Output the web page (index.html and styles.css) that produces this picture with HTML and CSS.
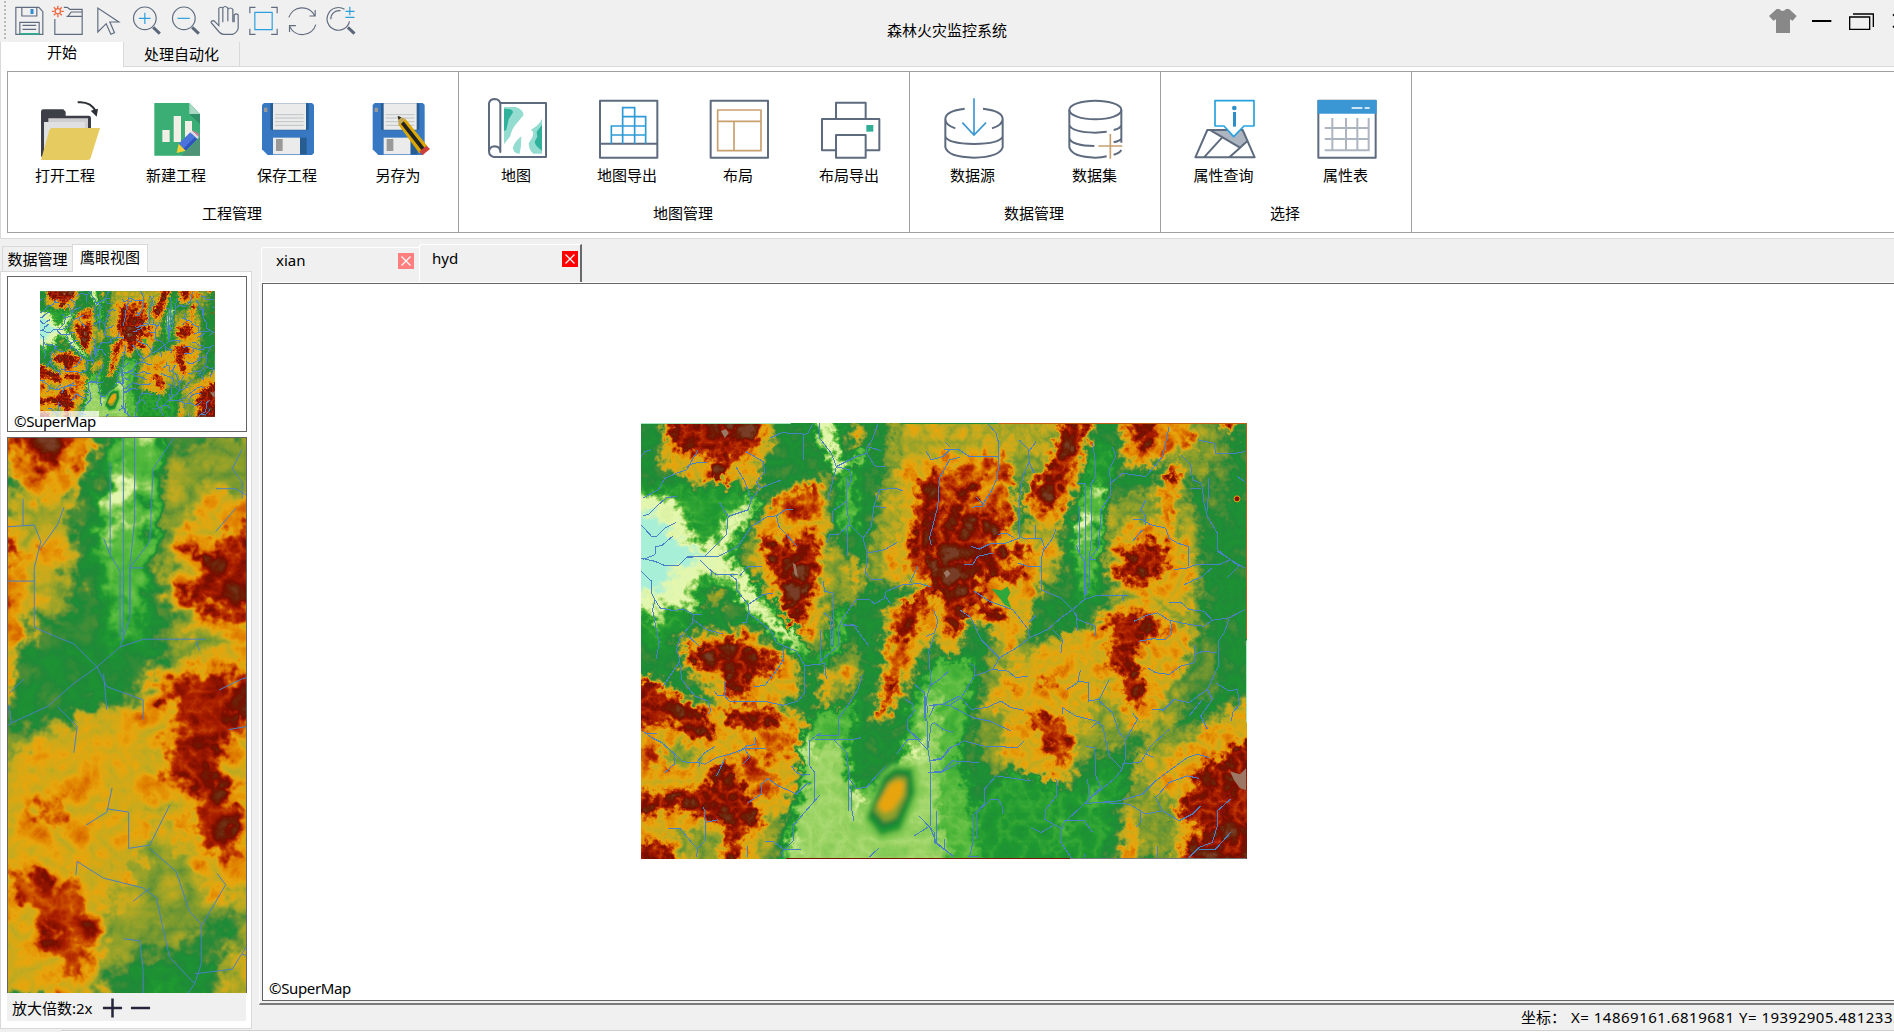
FILE: index.html
```html
<!DOCTYPE html>
<html lang="zh-CN">
<head>
<meta charset="utf-8">
<title>森林火灾监控系统</title>
<link rel="stylesheet" href="styles.css">
</head>
<body>
<svg class="defs" width="0" height="0" aria-hidden="true">
  <defs>
    <!-- Grey level n (#nnn) is elevation band n; the filter roughens the relief and colours it -->
    <filter id="relief" filterUnits="userSpaceOnUse" x="-24" y="-24" width="655" height="485" color-interpolation-filters="sRGB">
      <feGaussianBlur in="SourceGraphic" stdDeviation="3" result="h"/>
      <feTurbulence type="fractalNoise" baseFrequency="0.12" numOctaves="3" seed="7" result="w"/>
      <feDisplacementMap in="h" in2="w" scale="24" xChannelSelector="R" yChannelSelector="G" result="d"/>
      <feTurbulence type="turbulence" baseFrequency="0.05" numOctaves="4" seed="21" result="t"/>
      <feColorMatrix in="t" type="matrix" values="0 0 0 1 0  0 0 0 1 0  0 0 0 1 0  0 0 0 0 1" result="n"/>
      <feComposite in="d" in2="n" operator="arithmetic" k1="0.42" k2="0.85" k3="0" k4="0" result="m"/>
      <feColorMatrix in="m" type="matrix" values="1 0 0 0 0  0 1 0 0 0  0 0 1 0 0  0 0 0 0 1"/>
      <feComponentTransfer>
        <feFuncR type="table" tableValues=".66 .9 .59 .31 .12 .12 .35 .56 .77 .91 .88 .78 .66 .47 .42 .47"/>
        <feFuncG type="table" tableValues=".94 .97 .82 .72 .6 .54 .56 .63 .67 .65 .5 .28 .11 .05 .14 .24"/>
        <feFuncB type="table" tableValues=".85 .68 .38 .23 .19 .22 .21 .17 .12 .05 0 0 0 0 .03 .15"/>
      </feComponentTransfer>
    </filter>
    <filter id="soft" x="-30%" y="-30%" width="160%" height="160%"><feGaussianBlur stdDeviation="2.2"/></filter>
    <clipPath id="extent"><path d="M0 0H607V437H0z"/></clipPath>
    <symbol id="terrain" viewBox="0 0 607 437" overflow="visible">
      <g clip-path="url(#extent)"><g filter="url(#relief)">
        <path fill="#555" d="M-60-60H670V500H-60z"/>
        <!-- olive uplands -->
        <path fill="#777" d="M255-30H425L405 65 365 50 310 30 262 60 240 170 225 150 240 70zM470 80L520 60 545 45 560 110 562 200 545 240 545 290 520 325 500 310 470 330 440 340 420 290 450 200 470 180 460 120zM500-30H565L590 30 560 60 520 40 480 50zM350 220L420 215 460 220 460 300 430 360 410 400 375 390 350 350 335 310 340 270zM480 400L500 320 560 300 607 270V436H480zM112 85L160 60 190 50 192 240 170 230 150 205 130 190 112 150 90 150 85 170 75 190 60 180 110 115zM190 120L215 135 225 165 205 190 190 170zM195 235L218 222 222 250 208 275 188 290zM380 105L400 105 420 120 420 160 400 165 385 140z"/>
        <path fill="#666" d="M575 20L590 20 588 100 572 90zM540 230L575 215 580 270 545 280z"/>
        <path fill="#888" d="M265-30H420L400 30 360 28 300 25 262 45zM540 325L640 270V300L545 360 500 360 495 330zM245 60L262 60 262 150 240 160zM385 100L420 90 420 150 400 150z"/>
        <path fill="#999" d="M210 5h12v18h-12zM208 140h16v24h-16zM185 245l10 5-5 28-15 10zM200 245l12 2v20l-14-4z"/>
        <!-- north-west massif and foothills -->
        <path fill="#999" d="M14-30H128L136 8 128 30 118 42 118 70 100 84 80 92 60 80 45 70 50 55 30 48 14 40 24 15zM44 76L60 72 80 105 60 102zM118 105L130 75 150 65 182 55 188 100 184 150 180 200 168 224 150 205 132 176 112 145zM38 215L75 208 110 208 140 230 162 240 158 272 124 288 84 288 58 262 42 240z"/>
        <path fill="#ddd" d="M26-30H124L118 16 108 34 90 34 86 58 70 58 72 34 46 30 28 18zM117 105L132 118 155 124 166 104 177 118 178 147 166 187 165 214 152 200 139 182 136 154 122 125zM42 222L60 226 92 213 112 225 142 234 136 250 112 252 106 274 88 272 86 250 65 250 46 234z"/>
        <path fill="#eee" d="M140 135L168 132 162 182 150 186zM78-30h30v44h-30z"/>
        <path fill="#bbb" d="M132 80L178 58 180 92 160 96 138 92z"/>
        <!-- south-west highlands -->
        <path fill="#999" d="M-40 247L22 262 50 277 82 287 140 284 164 295 163 320 157 352 150 378 136 412 120 470H-40z"/>
        <path fill="#ddd" d="M-40 245L12 256 24 270 48 280 68 296 78 318 48 314 26 298 0 306-40 306zM82 286L132 286 142 302 118 308 86 302zM-40 362L25 372 60 366 84 336 98 356 112 384 124 400 104 408 98 440 84 440 86 404 60 392 30 387-40 400zM-40 416L30 422 42 470H-40z"/>
        <path fill="#bbb" d="M112 308L156 308 154 334 128 334zM90 322L120 340 140 360 128 378 104 360zM-10 325L20 330 28 344-10 342z"/>
        <path fill="#777" d="M16 322L48 320 60 338 36 346zM34 408L80 406 74 460 50 460zM125 400L140 390 130 460 110 460z"/>
        <!-- central massif -->
        <path fill="#999" d="M255 45L290 30 345 25 372 40 376 80 374 112 390 122 402 130 400 160 392 190 384 216 362 226 345 205 326 195 320 225 308 242 298 218 288 218 275 245 258 280 240 304 233 292 242 250 246 215 243 190 262 176 288 160 250 165 245 150 262 100z"/>
        <path fill="#bbb" d="M300 52L345 36 368 32 372 96 350 124 300 130 286 160 268 150 276 60zM254 190L290 166 290 190 270 215 262 250 244 296 238 286 250 240z"/>
        <path fill="#aaa" d="M334 56L356 40 360 78 338 84z"/>
        <path fill="#ddd" d="M280 62L302 40 296 90 286 130 270 146 274 100zM298 104L312 74 330 60 346 44 338 66 322 92 350 92 372 94 366 108 345 118 330 126 382 122 396 130 352 138 386 148 376 162 345 152 334 166 368 196 354 202 326 176 322 206 310 214 300 172 292 166 280 196 262 222 254 215 260 186 290 162 290 122zM255 252L262 248 246 286 240 284z"/>
        <path fill="#eee" d="M292 128L318 130 320 168 294 166z"/>
        <!-- northern ridges -->
        <path fill="#aaa" d="M384 65L404 48 416 20 420-30H458L446 30 436 66 420 98 402 106 386 92zM478-30H538L556 24 526 30 500 48 482 34zM570-30H605L592 18zM516 92L522 56 534 38 544 42 540 64 530 106z"/>
        <path fill="#ddd" d="M388 62L402 56 412 40 420 8 426-30H456L440 20 426 60 412 86 396 82zM494-30H522L514 14 504 30 490 20zM574-30h24l-10 38zM528 58L536 44 540 46 534 66z"/>
        <!-- eastern massifs -->
        <path fill="#999" d="M468 145L474 116 490 98 512 100 530 98 548 124 552 150 546 196 526 184 500 172 480 168zM458 188L500 176 530 192 548 215 548 240 528 266 518 296 490 306 474 274 460 250 452 232zM372 238L400 224 416 214 450 205 464 250 456 282 440 304 432 344 418 368 404 358 398 394 384 390 372 368 386 350 360 340 366 294 345 280 358 258z"/>
        <path fill="#ddd" d="M473 118L490 132 505 116 522 116 525 140 515 156 490 162 472 152 486 140zM463 196L485 190 508 190 522 204 502 218 494 236 502 262 502 284 488 280 482 250 463 242 474 216z"/>
        <path fill="#ccc" d="M384 288L405 290 428 302 432 322 420 348 410 332 398 306zM402 262L412 246 414 272zM356 258L372 262 382 272zM505 205L540 208 525 216zM380 378l12-2 4 14z"/>
        <!-- south-east massif -->
        <path fill="#999" d="M508 368L545 322 590 290 640 270V470H540L535 410 545 380zM478 460L484 402 494 390 498 420 500 460z"/>
        <path fill="#777" d="M502 400L530 396 536 420 504 426z"/>
        <path fill="#ddd" d="M555 350L580 332 640 300V470H575L540 428 562 408 532 388 552 368z"/>
        <!-- western basin and its outlet -->
        <path fill="#444" d="M-40 58L34 62 100 60 115 70 125 82 112 100 92 125 104 145 125 172 160 212 172 235 168 245 145 225 110 195 92 168 70 165 60 190 40 205 20 228-40 200z"/>
        <path fill="#111" d="M-40 68L30 74 46 94 50 118 76 120 86 92 106 82 112 70 116 86 102 98 90 122 80 130 106 152 120 180 152 208 166 234 158 228 142 216 106 186 92 158 60 152 50 172 60 188 40 186 22 182 18 212 8 190-40 172z"/>
        <path fill="#000" d="M-50 88L14 92 40 122 64 128 50 142 28 148 24 168-50 166z"/>
        <path fill="#111" d="M166-30H192L198 26 206 40 228 26 230 32 206 46 196 56 190 36 178 18z"/>
        <path fill="#333" d="M200 56L214 50 216 108 200 112zM188 205L208 178 202 220 186 240 168 246 186 228z"/>
        <!-- southern plain -->
        <path fill="#333" d="M158 318L182 286 215 282 220 350 245 362 262 330 272 276 298 234 334 240 326 290 318 330 330 380 345 470H134L152 400 162 360z"/>
        <path fill="#222" d="M170 326L200 318 206 362 228 384 256 348 278 326 284 276 298 270 298 400 318 470H140L158 392z"/>
        <path fill="#111" d="M262 332L286 318 280 340zM213 362L224 372 214 394zM164 308l8 4-4 30-6 0zM148 412l12 4-8 14z"/>
        <path fill="#555" d="M208 308L250 300 252 330 240 360 210 366z"/>
        <!-- northern corridor -->
        <path fill="#444" d="M440 60L448 20 470 20 470 60 462 120 456 176 438 180 432 140 434 100zM330 390L370 345 440 372 470 340 484 360 470 400 460 470H345z"/>
        <path fill="#333" d="M443 65L466 60 462 96 452 170 442 168 436 110zM445 375L460 360 456 390zM415 400L432 395 424 412z"/>
        <path fill="#111" d="M437 90h15v15h-15zM452 64h16v9h-16zM438 113h14v6h-14z"/>
      </g>
      <!-- smooth hill in the plain -->
      <g filter="url(#soft)">
        <path fill="#7cc850" d="M222 400L240 352 252 342 278 342 280 370 262 414 240 420z"/>
        <path fill="#1f9a30" d="M226 396L242 354 254 345 272 346 275 370 260 408 240 414z"/>
        <path fill="#1f8038" d="M229 393L245 356 255 349 269 350 270 372 257 402 242 407z"/>
        <path fill="#8ea02c" d="M233 388L247 361 256 354 266 355 266 373 255 396 244 400z"/>
        <path fill="#e8a410" d="M237 383L249 362 257 358 264 360 262 373 252 388 243 391z"/>
      </g>
      <path fill="#2ea83c" d="M351 166L361 168 367 164 370 170 367 176 371 186 364 182 358 174z"/>
      <path fill="#9c7864" d="M590 349L600 352 606 346V368L600 366 594 358zM303 150l4-3 3 4-4 4zM152 140l3 2 2 12-3-2zM80 8l5-2 3 4-4 5z"/>
      <circle cx="597" cy="76" r="3" fill="#8a1004" stroke="#e8a40c"/></g>
      <g class="rivers" transform="translate(-11 -13) scale(.33333)">
        <path d="M38 265L85 240 105 205 140 190 170 180 205 120M170 170L190 160 230 157M33 140L45 125 62 120M38 317L55 315 85 285 110 263 140 260M33 345L65 380 80 380 105 355 138 338M38 450L75 435 78 410 95 408 130 378M33 445L75 455 105 468 145 468 170 443 225 440 290 375 295 320 270 280M170 440H265L325 410 365 350 410 322 440 318 470 298 490 298M440 318L447 350 475 380 502 410M295 320L355 300 365 270 390 235 455 210M390 235L380 215 405 185 400 155 348 125M365 270L345 215 318 170M210 450L240 480 260 495H300L320 510V540L355 585V610L395 640 425 665 440 700 500 725 525 768V850L505 875 460 888 400 875 300 878 285 860 283 815M245 480V500M300 495H325M330 498L355 470H398M355 585L400 555 430 550M355 610L350 638H338M33 485L65 515V550L75 570 90 595 130 603 160 598 190 615H217M75 570L68 600 75 640 88 700 78 750M190 615L188 640 150 685 140 720 150 755 100 830M190 630L230 660 278 673M170 675L208 710M150 765L155 810 195 860 235 875 243 905 233 915M253 845L262 857H283M462 712V750L435 790 405 828 372 832M525 768L570 765 585 760 590 810M572 660V755L625 710V660L640 625 680 570 720 570 735 583 765 565 770 545 820 525 870 522 905 532M583 610L602 625V710M610 712V550L585 545 580 515M640 650L670 645 718 710M640 645L685 650M765 555L783 583M592 400L600 375 625 375 660 345 650 290V200M650 275L607 305V338M660 345L700 385 713 430 708 490 725 510 757 510M655 345V440M713 430L765 420 803 398M700 385L725 350 733 290 768 293M733 290L750 240 797 235 820 243M568 40L570 85 605 130 620 170 660 180 665 210 655 230M620 170L605 230 595 270M620 170L680 140 712 130 710 115 728 90 745 42M712 110L755 122M712 130L735 168 768 170M520 150V75L535 70 548 42M520 72L455 68 420 85M890 125L905 150 940 140 960 120 990 120M945 95L960 110M990 142L960 150 930 205 925 290 900 385 905 405M840 520L865 470M890 680L915 670 925 635 912 600M915 675L898 725 902 790V830L890 870 895 910M990 860L940 885 915 888 898 925M900 830L930 810 958 785M855 825L885 850V925L893 935V1020L835 960V930L855 905 850 885 828 870M888 860V935M835 960L870 990H835L800 1035M895 1020L905 945 915 940 940 960 970 970M895 1020L902 1060V1250L855 1280M870 1222L915 1270V1300L975 1345M922 1205V1298M945 1290V1320M902 1055L935 1050 960 1015 990 1005M895 1090H935L990 1060M698 797L685 840 660 880 625 930V980H560L540 995V1070L555 1090V1175L490 1250V1295L455 1330 460 1345M555 982L575 970M555 990H610L650 1030 660 1110 680 1138 710 1135 740 1100 768 1072M610 992H665L695 985M658 1110V1205M667 1130V1205L673 1237M555 1175L570 1158M545 1122L530 1125 500 1155 480 1145 445 1130 415 1108 395 1125V1155L355 1180M485 1070L500 1090 520 1098 540 1095M490 1320H515M405 1297H430L460 1320H490M38 965L65 985 95 1000 135 1035 160 1058 210 1060 225 1065 260 1045 300 1035 345 1018H410M52 972H82M133 1035V1065L105 1090M200 1060L225 1030 255 1012M210 1060L207 1073M325 1030L350 1010 378 1005V983M345 1018L360 1045 340 1063M285 1048L260 1100M115 1258H150L185 1300 203 1318 226 1295V1240L222 1195M226 1240L265 1232M203 1318L200 1345M353 1345V1312M718 1345L748 1317"/>
        <path transform="translate(900 0)" d="M175 40L200 70 208 100V140L120 140 90 120 45 120M208 140L205 200 185 245 165 275 160 290 128 292M165 285L140 262M270 90L298 120 300 155 280 200 270 270V380L290 388 335 385 345 410 335 450V540L370 555 395 565 430 600 465 570 480 525V450L510 410 515 300 545 255V220L580 190 650 200 700 140 720 50M298 155L315 190M298 125L320 95M125 410L150 418 180 403 230 400 270 385M205 373L235 372 255 385M270 370V385M318 345V385M345 420L370 385 380 358M105 465H130L145 440 190 430M265 460L295 470 335 470M490 100L498 155V200L487 220V378L480 445V520M470 560V222H445M465 555V455L450 430 440 405M450 430V290M480 450H500M465 570L500 558H595M580 560L585 575M545 225L540 180 560 140 550 110M430 600L445 630 500 650V680M440 610L445 665M430 600L395 625 355 660 300 685 270 710 210 745 190 780 135 800V770L120 760M300 685L297 660 250 600 180 575 135 545M297 640L320 618M370 660L400 690 395 730M90 600L125 625 155 690 210 745M190 780L235 785 260 805 295 800M135 800L95 865 60 888M95 865L125 900 170 895 215 875 245 895 285 903M60 888L130 925 180 935 245 965M0 890L20 885 60 888M0 1055L40 1045 65 1015 105 995 160 1010 265 1015 285 995M0 1090L40 1085 70 1055 150 1060M305 1115L200 1100 165 1140V1185L133 1215V1290L120 1345M140 1290V1215L185 1170H205L218 1190V1215M115 1343H150M755 135L785 165 790 210 818 220 825 280 835 320 865 370V420L930 470M808 90L855 100 860 130H920L948 125M840 205L835 305M785 235H815M925 200L948 215M735 480L775 475 800 465H870L905 450 930 465 948 475M865 425L905 450M930 468L895 505M765 525L820 500 848 475M778 470V410L745 400 720 385 710 355 665 345 640 330H610M640 360L610 395M650 345V320L635 300 650 270M720 580L755 578 780 600 825 605 850 632 825 650 780 645 720 632 685 610 650 618 615 635M850 632L900 625 948 600M900 630L885 670 868 695V770L835 840 780 880 735 870 700 905M725 635L728 670 710 690 670 688 630 695M798 705L795 760 755 770 720 795 680 790 655 775M798 735L820 725 865 730M835 840L850 870 815 920 835 960M860 820L900 845 925 840 932 885 910 910 908 935M820 870L780 920M670 900H705M453 783L445 820 413 840M445 815L478 820V875L510 870 540 810M510 875L550 910 570 970 588 990V1050L578 1080 540 1040 520 950 500 935 440 920 400 895 398 915M485 955L510 935M612 913L625 930 590 990M470 1012L495 1015 500 1060V1100L515 1135 470 1180 405 1240 395 1265V1300L425 1345M578 1080L560 1105 480 1170 475 1110M578 1065L635 1058 665 1010 720 960M650 1035L675 1045M470 1183L570 1175 640 1155 680 1115 720 1085 775 1045 805 1035 840 1045M515 1180L600 1185 650 1215 700 1205 680 1165 720 1120 775 1100 810 1108M700 1205L750 1235 790 1215 815 1190M635 1210V1240L620 1255M405 1235H465L490 1270M380 1110L382 1160 350 1200 345 1230 400 1260M305 1255L335 1270 370 1250M780 1345L810 1315 850 1300 865 1250V1205L905 1170M810 1320L860 1320 905 1270M685 1345V1310M465 1345V1335M20 1295V1205M0 1250L20 1300 75 1345"/>
      </g>
      <path fill="none" stroke="#1f8a38" d="M260 .5H358"/>
      <path fill="none" stroke="#c06010" d="M358 .5H606.500V216"/>
      <path fill="none" stroke="#a8e8c0" d="M0 .5H150M606.500 218V300"/>
      <path fill="none" stroke="#7a1408" d="M145 436.500H430"/>
      <path fill="none" stroke="#777" d="M430 436.500H606"/>
    </symbol>
  </defs>
</svg>

<header class="header">
  <div class="header-left">
    <div class="toolbar">
      <i class="grip"></i>
      <svg viewBox="28.500 0 117 126"><path class="s" d="M46 22H115L127 35V103H46zM64 22V48H109V22M58 103V67H116V103M66 76H107M66 88H107"/><path fill="#2e8fd0" d="M90 27h9v15h-9z"/><path fill="#2fae94" d="M58 99h58v5h-58z"/></svg>
      <svg viewBox="145.500 0 117 126"><path class="s" d="M163 57V103H245V28H208L200 22H190M245 36H212L202 50M245 49H198"/><circle class="r" cx="172" cy="34" r="8"/><path class="r" d="M172 17v7M172 44v8M154 34h8M182 34h8M160 22l5 5M184 22l-5 5M160 46l5-5M184 46l-5-5"/></svg>
      <svg viewBox="262.500 0 117 126"><path class="s" d="M292 24V96L309 79 317 71 331 103 342 98 328 66H355z"/></svg>
      <svg viewBox="379.500 0 117 126"><circle class="s" cx="433" cy="55" r="34"/><path class="b" d="M415 55H450M433 38V72"/><path class="h" d="M458 82L478 101"/></svg>
      <svg viewBox="496.500 0 117 126"><circle class="s" cx="550" cy="55" r="34"/><path class="b" d="M531 55H568"/><path class="h" d="M575 82L595 101"/></svg>
      <svg viewBox="613.500 0 117 126"><path class="s" d="M667 67V24Q661 19 655 25V77L640 62Q630 62 632 68L656 96Q662 103 670 103H697Q712 96 713 84V45Q707 38 701 45V67M667 64V24Q673 15 682 24V64M682 28Q690 20 697 28V67"/></svg>
      <svg viewBox="730.500 0 117 126"><path class="s" d="M748 40V22H765M812 22H830V40M830 86V103H812M765 103H748V86"/><path class="b" d="M763 37H815V89H763z"/></svg>
      <svg viewBox="847.500 0 117 126"><path class="s" d="M865 52A42 42 0 0 1 943 48M944 30V48H927M946 74A42 42 0 0 1 868 80M867 96V77H886"/></svg>
      <svg viewBox="964.500 0 117 126"><path class="s" d="M1032 28A34 34 0 1 0 1047 64M1020 32A25 25 0 0 0 991 58"/><path class="b" d="M1035 34H1062M1048 20V46M1035 52H1062"/><path class="h" d="M1042 82L1062 101"/></svg>
    </div>
    <nav class="ribbon-tabs"><span class="rtab on">开始</span><span class="rtab second">处理自动化</span></nav>
  </div>
  <h1 class="title">森林火灾监控系统</h1>
  <div class="window-buttons">
    <svg width="40" height="42" viewBox="810 0 120 126"><path fill="#888" d="M848 27H856Q866 39 876 27H885L908 48 896 62 888 58V99H846V58L838 62 825 48z"/></svg>
    <svg width="36" height="42" viewBox="930 0 108 126"><path fill="#000" d="M954 60h58v6h-58z"/></svg>
    <svg width="44" height="42" viewBox="1038 0 132 126"><path fill="none" stroke="#000" stroke-width="4" d="M1067 51H1127V88H1067zM1077 42H1138V81"/></svg>
    <svg width="10" height="42" viewBox="1170 0 30 126"><path fill="none" stroke="#000" stroke-width="5" d="M1197 43L1217 63 1197 82"/></svg>
  </div>
</header>

<section class="ribbon">
  <div class="groups">
    <div class="group">
      <div class="actions">
        <div class="action"><svg viewBox="105 300 180 180"><path fill="#3c3f47" d="M123 335Q123 328 130 328H190L197 335V347H266Q273 347 273 354V400H123z"/><path fill="#3c3f47" d="M123 380h12v90h-12z"/><path fill="#cfcfd1" d="M132 366H145V355H264V400H132z"/><path fill="#e0e0e2" d="M132 366H255V460H132z"/><path fill="#e5cb60" d="M154 384H300L272 474Q270 480 264 480H123L148 390z"/><path fill="none" stroke="#2d3036" stroke-width="6" d="M233 307Q272 303 289 336"/><path fill="#2d3036" d="M272 332L294 326 290 350z"/></svg><span>打开工程</span></div>
        <div class="action"><svg viewBox="438 300 180 180"><path fill="#3aae74" d="M463 309H568L600 342V467H463z"/><path fill="#a9d9c4" d="M568 309L600 342H568z"/><path fill="#2e8f68" d="M568 342h32v30z"/><path fill="#f1efe6" d="M487 390h22v36h-22zM521 348h22v78h-22zM555 363h21v60h-21z"/><path fill="#4e9278" d="M600 412V467H545z"/><path fill="#4a73dc" d="M536 431L571 397 592 417 557 452z"/><path fill="#2f54bb" d="M550 446L585 411 592 417 557 452z"/><path fill="#f4cf35" d="M536 431L557 452 530 459z"/><path fill="#d9dce5" d="M571 397L577 392 597 411 592 417z"/><path fill="#ec6fa5" d="M577 392L597 411 597 403 581 392z"/></svg><span>新建工程</span></div>
        <div class="action"><svg viewBox="771 300 180 180"><g id="floppy"><path fill="#3878c2" d="M792 309H936L942 315V459L936 465H803L786 448V315z"/><path fill="#285d92" d="M811 310H926V385Q926 391 920 391H817Q811 391 811 385z"/><path fill="#ebebeb" d="M819 310H918V389H819z"/><path stroke="#b5bcbc" stroke-width="2.500" d="M825 344H911M825 354H911M825 365H911M825 376H911"/><path fill="#ebebeb" d="M819 413h81v50h-81z"/><path fill="#285d92" d="M900 413h20v50h-20z"/><path fill="#999" d="M828 417h20v36h-20zM792 323h10v13h-10z"/></g></svg><span>保存工程</span></div>
        <div class="action"><svg viewBox="1105 300 180 180"><use href="#floppy" x="333"/><path fill="#dca800" d="M1197 375L1217 356 1283 438 1259 460z"/><path fill="#222" d="M1204 372L1212 364 1275 444 1267 452z"/><path fill="#c2a658" d="M1194 348L1217 356 1197 378z"/><path fill="#222" d="M1194 348l11 4-8 7z"/><path fill="#cc4038" d="M1259 454L1281 437 1291 447 1268 466z"/></svg><span>另存为</span></div>
      </div>
      <div class="group-name">工程管理</div>
    </div>
    <div class="group">
      <div class="actions">
        <div class="action"><svg viewBox="108 120 180 180"><path class="g" d="M152 129H288V291H131Q117 288 117 274V130Q120 117 134 117 150 118 151 132V276Q151 260 134 259 118 260 117 274"/><path fill="#94dbd0" d="M162 141H196Q220 148 221 165L196 195Q187 205 180 230L162 252zM214 229Q214 265 208 282 188 279 189 262 194 245 214 229zM276 176V281H250Q236 270 236 250L248 230 250 217 243 209Q268 195 276 176z"/><path fill="#30b19b" d="M162 146Q188 145 189 157L176 178 169 210 162 213zM276 194V272Q255 257 254 245L262 230 260 215z"/></svg><span>地图</span></div>
        <div class="action"><svg viewBox="440 120 180 180"><path class="g" d="M449 122H621V293H449zM449 251H621"/><path fill="none" stroke="#2e9bd6" stroke-width="5" d="M483 251V198H586M517 251V143H553V251M517 170H586V251M483 225H586"/></svg><span>地图导出</span></div>
        <div class="action"><svg viewBox="774 120 180 180"><path class="g" d="M782 122H954V293H782z"/><path fill="none" stroke="#c8a06e" stroke-width="5" stroke-linejoin="round" d="M803 150H933V272H803zM803 184H933M852 184V272"/></svg><span>布局</span></div>
        <div class="action"><svg viewBox="1106 120 180 180"><path class="g" d="M1157 177V128H1246V177M1157 271H1115V177H1287V271H1246M1157 225H1246V293H1157z"/><path fill="#2fae94" d="M1248 195h21v20h-21z"/></svg><span>布局导出</span></div>
      </div>
      <div class="group-name">地图管理</div>
    </div>
    <div class="group pair">
      <div class="actions">
        <div class="action"><svg viewBox="130 120 180 180"><path class="g" d="M195 146Q137 153 137 177V262Q145 292 223 293 300 292 309 262V177Q309 153 250 146M137 177Q137 195 167 205M309 177Q309 195 277 205M137 230Q145 251 223 252 300 251 309 230"/><path fill="none" stroke="#3c98d4" stroke-width="5" d="M223 115V224M188 188L223 225 259 188"/></svg><span>数据源</span></div>
        <div class="action"><svg viewBox="497 120 180 180"><ellipse class="g" cx="588" cy="150" rx="78" ry="28"/><path class="g" d="M510 150V262Q518 292 588 293 608 293 622 289M666 150V248M510 195Q518 217 588 218L622 215M666 195Q664 205 643 210M510 235Q518 257 585 258M666 235Q664 243 643 247M666 270Q660 280 643 284"/><path fill="none" stroke="#c8a06e" stroke-width="5" d="M633 222V296M597 258H669"/></svg><span>数据集</span></div>
      </div>
      <div class="group-name">数据管理</div>
    </div>
    <div class="group pair">
      <div class="actions">
        <div class="action"><svg viewBox="882 120 180 180"><path fill="#adb5c1" d="M932 211H1028L1040 243 1020 263z"/><path class="g" d="M922 210H1028L1064 292H886zM932 211L1020 263 1042 243M912 292L966 233M988 292L1022 262"/><path fill="#fff" stroke="#25a2de" stroke-width="5" stroke-linejoin="round" d="M945 122H1062V198H1032L1001 230 972 198H945z"/><circle cx="1003" cy="144" r="7" fill="#2e8fc8"/><path fill="#2e8fc8" d="M999 156h9v44h-9z"/></svg><span>属性查询</span></div>
        <div class="action"><svg viewBox="1249 120 180 180"><path class="g" d="M1256 122H1428V293H1256z"/><path fill="#3b97d4" d="M1254 120h177v41h-177z"/><path fill="none" stroke="#fff" stroke-width="5" d="M1356 144h32M1395 144h15"/><path fill="none" stroke="#adb5c1" stroke-width="6" d="M1298 174V272M1339 174V272M1373 174V272M1407 174V272M1275 204H1410M1275 237H1410M1275 271H1410"/></svg><span>属性表</span></div>
      </div>
      <div class="group-name">选择</div>
    </div>
  </div>
</section>

<main class="workspace">
  <aside class="side">
    <nav class="side-tabs"><span class="stab">数据管理</span><span class="stab on">鹰眼视图</span></nav>
    <div class="side-panel">
      <div class="overview">
        <svg width="175" height="126" viewBox="0 0 607 437" preserveAspectRatio="none"><use href="#terrain" width="607" height="437"/></svg>
        <span class="credit">©SuperMap</span>
      </div>
      <svg class="magnifier" viewBox="387.400 71.400 120.200 280.300" preserveAspectRatio="none"><use href="#terrain" width="607" height="437"/></svg>
      <div class="zoom-bar"><span>放大倍数:2x</span>
        <svg width="22" height="22" viewBox="0 0 22 22"><path stroke="#24243a" stroke-width="2.600" d="M1 11H21M11 1V21"/></svg>
        <svg width="22" height="22" viewBox="0 0 22 22"><path stroke="#24243a" stroke-width="2.600" d="M1 11H21"/></svg>
      </div>
    </div>
  </aside>
  <section class="documents">
    <nav class="doc-tabs">
      <div class="doc-tab"><span>xian</span><svg class="close faded" viewBox="0 0 16 16"><path d="M3.500 3.500L12.500 12.500M12.500 3.500L3.500 12.500"/></svg></div>
      <div class="doc-tab on"><span>hyd</span><svg class="close" viewBox="0 0 16 16"><path d="M3.500 3.500L12.500 12.500M12.500 3.500L3.500 12.500"/></svg></div>
    </nav>
    <div class="view-frame">
      <div class="view">
        <svg class="map" width="606" height="436" viewBox="0 0 607 437" preserveAspectRatio="none"><use href="#terrain" width="607" height="437"/></svg>
        <span class="credit">©SuperMap</span>
      </div>
    </div>
    <footer class="status"><span>坐标：</span><span class="coords">X= 14869161.6819681 Y= 19392905.4812335</span></footer>
  </section>
</main>
<div class="bottom-edge"></div>
</body>
</html>
```
FILE: styles.css
```css
* { box-sizing: border-box; }
body {
  margin: 0;
  width: 1894px;
  height: 1032px;
  overflow: hidden;
  background: #f0f0f0;
  color: #000;
  font: 15px/20px "Noto Sans", "Noto Sans CJK SC", sans-serif;
  display: flex;
  flex-direction: column;
}
svg { display: block; overflow: visible; }
.defs { position: absolute; }

/* header */
.header {
  height: 67px;
  flex: none;
  display: grid;
  grid-template-columns: 1fr auto 1fr;
  border-bottom: 1px solid #d9d9d9;
}
.toolbar { height: 42px; display: flex; }
.toolbar svg { width: 39px; height: 42px; flex: none; }
.grip {
  width: 2px;
  height: 40px;
  margin: 1px 3.500px 0 4px;
  background: repeating-linear-gradient(#bbb 0 2px, transparent 2px 4px);
}
.s, .b, .r, .h, .g { fill: none; }
.s { stroke: #5f6b7e; stroke-width: 3.500; }
.b { stroke: #2a9fdc; stroke-width: 3.500; }
.r { stroke: #f06840; stroke-width: 4; }
.h { stroke: #5c6879; stroke-width: 9; }
.g { stroke: #5e6b7f; stroke-width: 6; stroke-linejoin: round; }
.ribbon-tabs { display: flex; height: 25px; }
.rtab { text-align: center; border-right: 1px solid #d9d9d9; height: 24px; line-height: 25px; }
.rtab.on { width: 124px; height: 25px; line-height: 21px; background: #fff; border-left: 1px solid #d9d9d9; }
.rtab.second { width: 116px; }
.title { margin: 20px 0 0; font-size: 15px; font-weight: 400; line-height: 20px; }
.window-buttons { display: flex; justify-content: flex-end; overflow: hidden; }

/* ribbon */
.ribbon {
  height: 172px;
  flex: none;
  padding: 4px 0 5px 6px;
  background: #fff;
  border: solid #d9d9d9;
  border-width: 0 0 1px 1px;
}
.groups { display: flex; height: 162px; border: 1px solid #a0a0a0; border-right: 0; }
.group { width: 451px; border-right: 1px solid #a0a0a0; text-align: center; }
.group.pair { width: 251px; }
.actions { display: flex; justify-content: center; padding: 28px 3px 0 0; }
.action { width: 111px; }
.pair .action { width: 122px; }
.action svg { width: 60px; height: 60px; margin: 0 auto 5px; }
.action span { display: block; }
.group-name { margin-top: 18px; padding-right: 2px; }

/* workspace */
.workspace { flex: 1; min-height: 0; display: flex; }
.side { width: 252px; padding-top: 5px; }
.side-tabs { display: flex; align-items: flex-end; height: 27px; padding-left: 2px; }
.stab {
  width: 70px;
  height: 25px;
  line-height: 25px;
  text-align: center;
  border: solid #d9d9d9;
  border-width: 1px 0 0 1px;
  white-space: nowrap;
}
.stab.on { width: 76px; height: 28px; margin-bottom: -1px; line-height: 24px; background: #fff; border-right-width: 1px; z-index: 1; }
.side-panel { height: 758px; padding: 4px 4px 0 6px; background: #fff; border: 1px solid #d9d9d9; }
.overview { position: relative; width: 240px; height: 156px; padding: 14px 0 0 32px; border: 1px solid #646464; }
.overview svg { overflow: hidden; }
.credit {
  position: absolute;
  left: 3px;
  bottom: 0;
  padding: 0 3px;
  letter-spacing: -.35px;
  background: rgba(255, 255, 255, .7);
}
.view .credit { bottom: 2px; }
.magnifier { width: 240px; height: 556px; margin-top: 5px; border: 1px solid #646464; border-bottom: 0; overflow: hidden; }
.zoom-bar { display: flex; align-items: center; gap: 7px; width: 239px; height: 28px; padding: 2px 0 0 5px; background: #f0f0f0; }
.zoom-bar svg { width: 21px; }
.zoom-bar span { margin-right: 2px; }
.rivers path { fill: none; stroke: #4a80c4; stroke-width: 1px; vector-effect: non-scaling-stroke; shape-rendering: crispEdges; }

.documents { flex: 1; min-width: 0; margin-left: 7px; padding-top: 5px; }
.doc-tabs { display: flex; align-items: flex-end; height: 38px; padding-left: 2px; }
.doc-tab {
  display: flex;
  justify-content: space-between;
  width: 158px;
  height: 35px;
  padding: 5px 5px 0 14px;
  border: solid #fff;
  border-width: 1px 0 0 1px;
  border-radius: 3px 0 0;
}
.doc-tab.on { width: 163px; height: 38px; padding: 6px 2px 0 12px; border-right: 2px solid #696969; }
.doc-tab span { line-height: 14px; }
.close { width: 16px; height: 16px; background: #f00; }
.close path { fill: none; stroke: #fff; stroke-width: 1.200; }
.close.faded { background: #ff7f7f; }
.view-frame { height: 723px; border: solid #fff; border-width: 1px 0 0 1px; border-bottom: 2px solid #7b7b7b; padding: 0 0 2px 2px; }
.view { position: relative; height: 718px; border: 1px solid #646464; border-right: 0; background: #fff; padding: 139px 0 0 378px; }
.map { overflow: hidden; }
.status { display: flex; padding: 2px 0 0 1262px; line-height: 20px; white-space: nowrap; }
.coords { margin-left: 5px; letter-spacing: .5px; }
.bottom-edge { height: 2px; margin-left: 61px; border-top: 1px solid #cfcfcf; background: #fff; }
```
